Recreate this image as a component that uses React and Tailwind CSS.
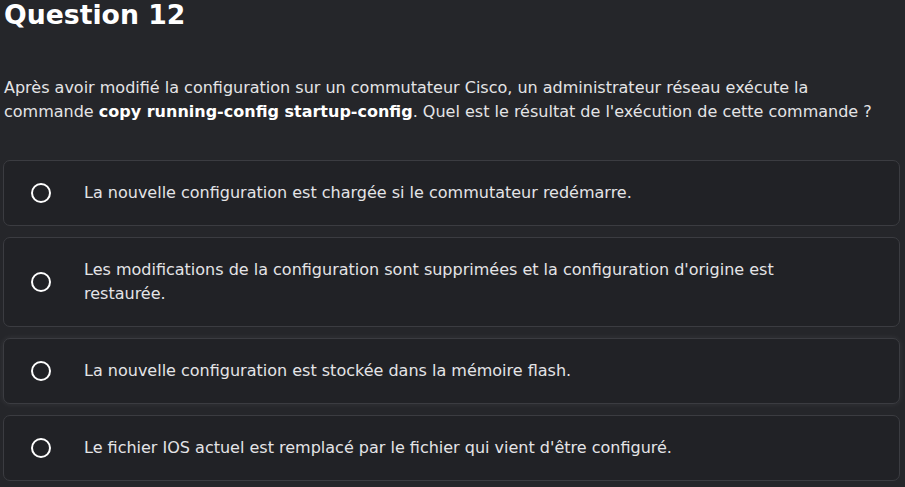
const options = [
  "La nouvelle configuration est chargée si le commutateur redémarre.",
  "Les modifications de la configuration sont supprimées et la configuration d'origine est\nrestaurée.",
  "La nouvelle configuration est stockée dans la mémoire flash.",
  "Le fichier IOS actuel est remplacé par le fichier qui vient d'être configuré.",
];

function Radio() {
  return <span className="block w-5 h-5 rounded-full border-2 border-white shrink-0" />;
}

export default function App() {
  return (
    <div className="min-h-screen bg-[#25262a] text-[#e4e4e6] px-[3px] pb-4" style={{ fontFamily: '"DejaVu Sans", sans-serif' }}>
      <h1 className="pl-[1px] text-[26.7px] leading-[30px] font-bold text-white">Question 12</h1>

      <p className="pl-[1px] mt-[46px] text-[16px] leading-[24px]">
        Après avoir modifié la configuration sur un commutateur Cisco, un administrateur réseau exécute la
        <br />
        commande <strong className="font-bold text-white">copy running-config startup-config</strong>. Quel est le résultat de l'exécution de cette commande ?
      </p>

      <div className="mt-[36px] flex flex-col gap-[11px] w-[897px]">
        {options.map((text, i) => (
          <label
            key={i}
            className={`flex items-center rounded-[7px] border border-[#3b3c41] bg-[#212226] py-5 pl-[27px] pr-4 ${i === 2 ? "shadow-[0_0_6px_rgba(255,255,255,0.08)]" : ""}`}
          >
            <Radio />
            <span className="ml-[33px] text-[16px] leading-[24px] whitespace-pre-line">{text}</span>
          </label>
        ))}
      </div>
    </div>
  );
}
